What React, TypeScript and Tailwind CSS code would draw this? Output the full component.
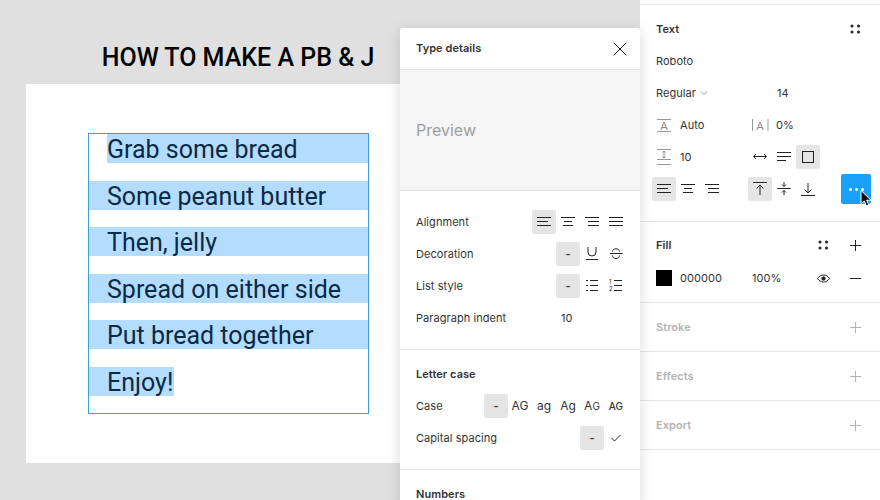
import type React from 'react';
import { X } from 'lucide-react';

const Ic: React.FC<{ children: React.ReactNode }> = ({ children }) => (
  <svg width="24" height="24" viewBox="0 0 24 24" fill="none" stroke="#222" strokeWidth="1">
    {children}
  </svg>
);

const Lines: React.FC<{ rows: [number, number][] }> = ({ rows }) => (
  <Ic>
    {rows.map(([a, b], i) => (
      <path key={i} d={`M${a} ${7.5 + i * 4}H${b}`} />
    ))}
  </Ic>
);

const AlignLeft = () => <Lines rows={[[5, 19], [5, 16], [5, 19]]} />;
const AlignCenter = () => <Lines rows={[[5, 19], [8, 16], [7, 17]]} />;
const AlignRight = () => <Lines rows={[[5, 19], [8, 19], [8, 19]]} />;
const AlignJustify = () => <Lines rows={[[5, 19], [5, 19], [5, 19]]} />;
const WrapLines = () => <Lines rows={[[5, 19], [5, 19], [5, 14]]} />;

const Underline = () => (
  <Ic>
    <path d="M8 5v5a4 4 0 0 0 8 0V5" />
    <path d="M6 17.5h12" />
  </Ic>
);
const Strike = () => (
  <Ic>
    <path d="M6 11.500h12.500" />
    <path d="M8.500 9.500c0-1.600 1.500-2.700 3.500-2.700s3.500 1.100 3.500 2.700M8.500 13.500c0 1.800 1.500 3 3.500 3s3.500-1.200 3.500-3" />
  </Ic>
);
const Bullets = () => (
  <Ic>
    <path d="M6 6.500h2M6 11.500h2M6 16.500h2M10 6.500h8M10 11.500h8M10 16.500h8" />
  </Ic>
);
const Numbered = () => (
  <Ic>
    <path d="M10 6.500h8M10 11.500h8M10 16.500h8" />
    <text x="5" y="10" fontSize="6" fill="#222" stroke="none" fontFamily="Inter">1</text>
    <text x="5" y="17" fontSize="6" fill="#222" stroke="none" fontFamily="Inter">2</text>
  </Ic>
);
const Check = () => (
  <Ic>
    <path d="M7.500 12l3 3 6-6" />
  </Ic>
);
const Dots = () => (
  <svg width="24" height="24" viewBox="0 0 24 24" fill="#222">
    <circle cx="9" cy="9" r="1.500" />
    <circle cx="15.500" cy="9" r="1.500" />
    <circle cx="9" cy="15" r="1.500" />
    <circle cx="15.500" cy="15" r="1.500" />
  </svg>
);
const Plus: React.FC<{ muted?: boolean }> = ({ muted }) => (
  <svg width="24" height="24" viewBox="0 0 24 24" fill="none" stroke={muted ? '#b3b3b3' : '#222'}>
    <path d="M12.500 7v11M7 12.500h11" />
  </svg>
);
const Minus = () => (
  <Ic>
    <path d="M7 12.500h11" />
  </Ic>
);
const Eye = () => (
  <Ic>
    <path d="M6.500 12.500c1.500-2.300 3.500-3.500 6-3.500s4.500 1.200 6 3.500c-1.500 2.300-3.500 3.500-6 3.500s-4.500-1.200-6-3.500z" />
    <circle cx="12.500" cy="12.500" r="1.700" fill="#222" />
  </Ic>
);
const LineHeight = () => (
  <Ic>
    <path d="M5 6.500h14M5 18.500h14" stroke="#999" />
    <text x="12" y="16.500" fontSize="11" textAnchor="middle" fill="#888" stroke="none" fontFamily="Inter">A</text>
  </Ic>
);
const LetterSpacing = () => (
  <Ic>
    <path d="M4.500 6v12M20 6v12" stroke="#999" />
    <text x="12.200" y="16.500" fontSize="11" textAnchor="middle" fill="#888" stroke="none" fontFamily="Inter">A</text>
  </Ic>
);
const ParaSpacing = () => (
  <Ic>
    <path d="M5 4.500h14M5 14.500h14M5 19.500h14" stroke="#999" />
    <path d="M12 6v7M10.500 7.500L12 6l1.500 1.500M10.500 11.500L12 13l1.500-1.500" stroke="#888" />
  </Ic>
);
const Arrows = () => (
  <Ic>
    <path d="M5.500 11.500h13M8 9l-2.500 2.500L8 14M16 9l2.500 2.500L16 14" />
  </Ic>
);
const Square = () => (
  <Ic>
    <rect x="6.500" y="6.500" width="11" height="11" />
  </Ic>
);
const VTop = () => (
  <Ic>
    <path d="M5 5.500h14M12 8v10M8.500 11.500L12 8l3.500 3.500" />
  </Ic>
);
const VMid = () => (
  <Ic>
    <path d="M5.500 11.500h13M12 5v4.500M10 7.500l2 2 2-2M12 13.500V18M10 15.500l2-2 2 2" />
  </Ic>
);
const VBottom = () => (
  <Ic>
    <path d="M5 18.500h14M12 6v10M8.500 12.500L12 16l3.500-3.500" />
  </Ic>
);

const Cell: React.FC<{ on?: boolean; children: React.ReactNode }> = ({ on, children }) => (
  <div className={`w-6 h-6 shrink-0 flex items-center justify-center rounded-[2px] ${on ? 'bg-[#e5e5e5]' : ''}`}>
    {children}
  </div>
);

const Dash = () => <span className="font-semibold">-</span>;

const Row: React.FC<{ label: string; children: React.ReactNode }> = ({ label, children }) => (
  <div className="h-8 flex items-center justify-between">
    <span className="text-[#333]">{label}</span>
    <div className="flex items-center">{children}</div>
  </div>
);

const steps = ['Some peanut butter', 'Then, jelly', 'Spread on either side', 'Put bread together'];

const MutedSection: React.FC<{ title: string }> = ({ title }) => (
  <div className="h-[49px] pl-4 pr-[13px] flex items-center justify-between border-b border-[#e5e5e5]">
    <span className="font-semibold text-[#b3b3b3]">{title}</span>
    <Plus muted />
  </div>
);

export default function App() {
  return (
    <div className="relative w-[880px] h-[500px] flex overflow-hidden bg-white font-['Inter',sans-serif] text-[11px] tracking-[0.005em] text-[#333]">
      {/* Canvas */}
      <div className="w-[640px] h-full shrink-0 bg-[#e0e0e0] overflow-hidden pt-[42px] pl-[26px]">
        <div className="w-[424px] h-8 leading-8 text-center font-['Roboto',sans-serif] font-medium text-[25px] tracking-normal text-black">
          HOW TO MAKE A PB &amp; J
        </div>
        <div className="w-[424px] h-[379px] mt-[10px] bg-white pt-[49px] pl-[62px]">
          <div className="w-[281px] h-[281px] border border-[#3aa0dc] font-['Roboto',sans-serif] text-[25px] tracking-normal leading-[31px] text-[#0b2a45] flex flex-col gap-[17.500px]">
            <div className="ml-[18px] h-[29px] bg-[#b3dcff]">Grab some bread</div>
            {steps.map((s) => (
              <div key={s} className="h-[29px] bg-[#b3dcff] pl-[18px]">
                {s}
              </div>
            ))}
            <div className="h-[29px] w-[85px] bg-[#b3dcff] pl-[18px]">Enjoy!</div>
          </div>
        </div>
      </div>

      {/* Properties panel */}
      <div className="w-[240px] shrink-0 pt-1">
        <div className="border-t border-b border-[#e5e5e5] pt-2 pb-4 pl-3 pr-[13px]">
          <div className="h-8 pl-1 flex items-center justify-between">
            <span className="font-semibold">Text</span>
            <Dots />
          </div>
          <div className="h-8 pl-1 flex items-center">Roboto</div>
          <div className="h-8 pl-1 flex items-center">
            <div className="w-[121px] flex items-center">
              <span>Regular</span>
              <svg className="ml-[4px]" width="8" height="6" viewBox="0 0 8 6" fill="none" stroke="#999">
                <path d="M1 1.500l3 3 3-3" />
              </svg>
            </div>
            <span>14</span>
          </div>
          <div className="h-8 flex items-center">
            <Cell><LineHeight /></Cell>
            <span className="ml-1 w-[68px]">Auto</span>
            <Cell><LetterSpacing /></Cell>
            <span className="ml-1">0%</span>
          </div>
          <div className="h-8 flex items-center">
            <Cell><ParaSpacing /></Cell>
            <span className="ml-1 w-[68px]">10</span>
            <Cell><Arrows /></Cell>
            <Cell><WrapLines /></Cell>
            <Cell on><Square /></Cell>
          </div>
          <div className="h-8 flex items-center">
            <Cell on><AlignLeft /></Cell>
            <Cell><AlignCenter /></Cell>
            <Cell><AlignRight /></Cell>
            <div className="w-6 shrink-0" />
            <Cell on><VTop /></Cell>
            <Cell><VMid /></Cell>
            <Cell><VBottom /></Cell>
            <div className="ml-[21px] w-[30px] h-[30px] shrink-0 rounded-[2px] bg-[#18a0fb] flex items-center justify-center gap-[3px]">
              <span className="w-[3px] h-[3px] rounded-full bg-white" />
              <span className="w-[3px] h-[3px] rounded-full bg-white" />
              <span className="w-[3px] h-[3px] rounded-full bg-white" />
            </div>
          </div>
        </div>

        <div className="border-b border-[#e5e5e5] pt-[7px] pb-2 pl-4 pr-[13px]">
          <div className="h-8 flex items-center">
            <span className="font-semibold flex-1">Fill</span>
            <Dots />
            <div className="ml-2"><Plus /></div>
          </div>
          <div className="h-8 mt-px flex items-center">
            <div className="w-4 h-4 bg-black" />
            <span className="ml-2 w-[72px]">000000</span>
            <span className="flex-1">100%</span>
            <Eye />
            <div className="ml-2"><Minus /></div>
          </div>
        </div>

        <MutedSection title="Stroke" />
        <MutedSection title="Effects" />
        <MutedSection title="Export" />
      </div>

      {/* Type details popover */}
      <div className="absolute left-[400px] top-[28px] w-[240px] h-[480px] bg-white rounded-t-[2px] shadow-[0_2px_14px_rgba(0,0,0,0.15)]">
        <div className="h-[42px] pl-4 pr-2 flex items-center justify-between border-b border-[#e5e5e5]">
          <span className="font-semibold">Type details</span>
          <X size={24} strokeWidth={1} color="#111" />
        </div>
        <div className="h-[121px] pl-4 flex items-center bg-[#f5f5f5] border-b border-[#e5e5e5] text-[16px] tracking-normal text-[#a0a0a0]">
          Preview
        </div>
        <div className="pt-[15px] pb-[15px] pl-4 pr-3 border-b border-[#e5e5e5]">
          <Row label="Alignment">
            <Cell on><AlignLeft /></Cell>
            <Cell><AlignCenter /></Cell>
            <Cell><AlignRight /></Cell>
            <Cell><AlignJustify /></Cell>
          </Row>
          <Row label="Decoration">
            <Cell on><Dash /></Cell>
            <Cell><Underline /></Cell>
            <Cell><Strike /></Cell>
          </Row>
          <Row label="List style">
            <Cell on><Dash /></Cell>
            <Cell><Bullets /></Cell>
            <Cell><Numbered /></Cell>
          </Row>
          <Row label="Paragraph indent">
            <div className="w-[72px] pl-[5px]">10</div>
          </Row>
        </div>
        <div className="pt-2 pb-[15px] pl-4 pr-3 border-b border-[#e5e5e5]">
          <div className="h-8 flex items-center font-semibold">Letter case</div>
          <Row label="Case">
            <Cell on><Dash /></Cell>
            <Cell><span className="text-[12px]">AG</span></Cell>
            <Cell><span className="text-[12px]">ag</span></Cell>
            <Cell><span className="text-[12px]">Ag</span></Cell>
            <Cell><span className="text-[12px]">A<span className="text-[10px]">G</span></span></Cell>
            <Cell><span className="text-[10px] font-medium">AG</span></Cell>
          </Row>
          <Row label="Capital spacing">
            <Cell on><Dash /></Cell>
            <Cell><Check /></Cell>
          </Row>
        </div>
        <div className="pt-2 pl-4">
          <div className="h-8 flex items-center font-semibold">Numbers</div>
        </div>
      </div>

      {/* Mouse cursor */}
      <svg className="absolute left-[859px] top-[189px]" width="14" height="20" viewBox="0 0 14 20">
        <path d="M2 1.500v13.500l3.200-3 2.300 5 2.400-1-2.300-4.800h4.400z" fill="#111" stroke="#fff" strokeWidth="1" />
      </svg>
    </div>
  );
}
